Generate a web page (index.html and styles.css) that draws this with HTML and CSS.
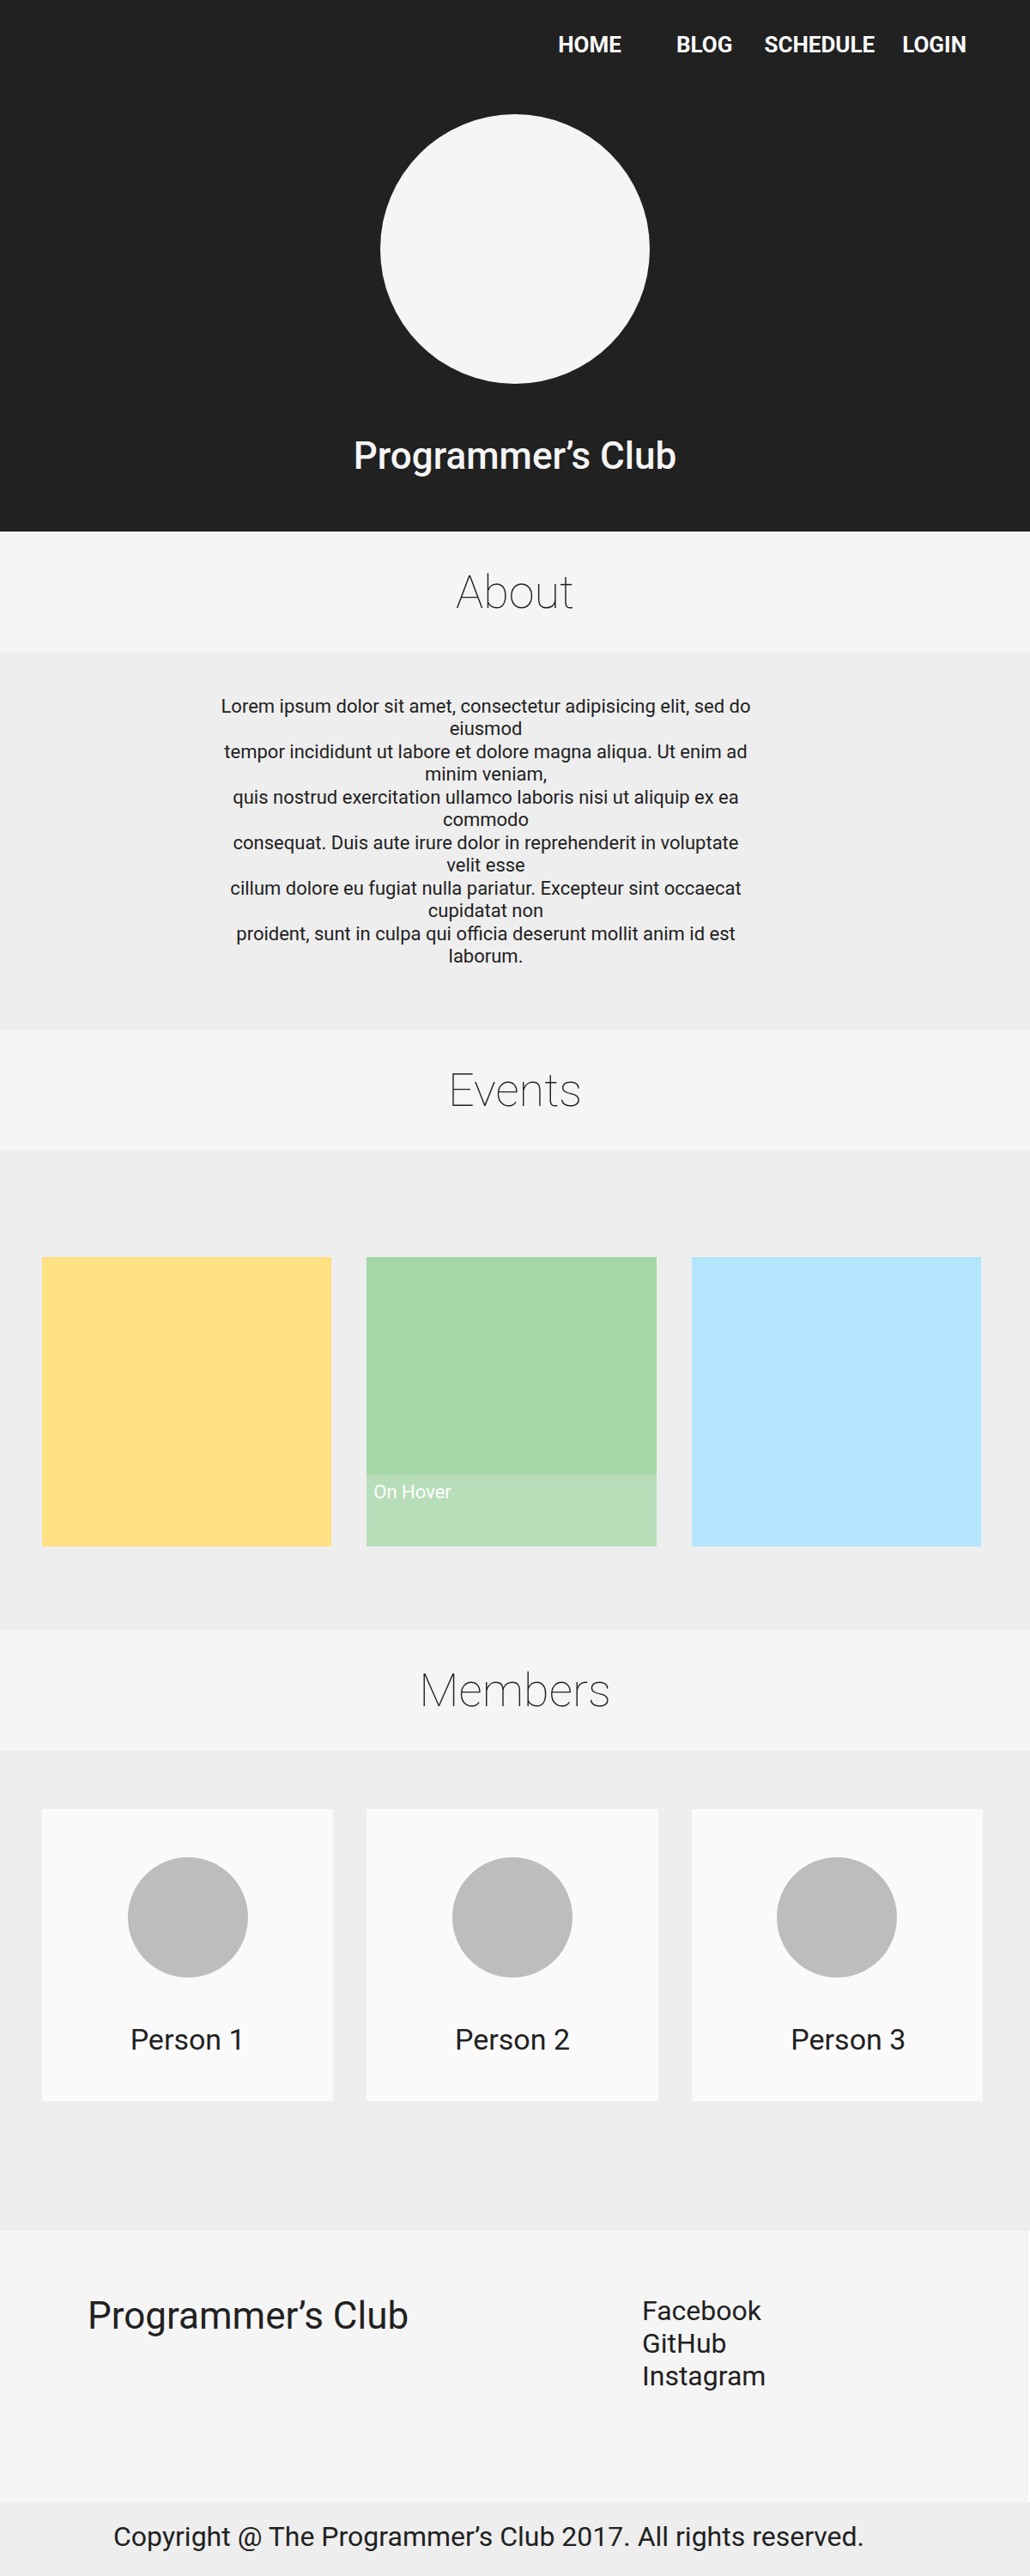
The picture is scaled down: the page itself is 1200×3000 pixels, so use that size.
FILE: index.html
```html
<!DOCTYPE html>
<html lang="en">
<head>
<meta charset="utf-8">
<title>Programmer’s Club</title>
<link rel="stylesheet" href="styles.css">
</head>
<body>
<header class="hero">
  <nav class="nav">
    <a class="nav-home" href="#">HOME</a>
    <a class="nav-blog" href="#">BLOG</a>
    <a class="nav-schedule" href="#">SCHEDULE</a>
    <a href="#">LOGIN</a>
  </nav>
  <div class="logo"></div>
  <h1 class="hero-title">Programmer’s Club</h1>
</header>
<main>
  <h2 class="heading">About</h2>
  <section class="about">
    <div class="about-text">
      <p>Lorem ipsum dolor sit amet, consectetur adipisicing elit, sed do eiusmod</p>
      <p>tempor incididunt ut labore et dolore magna aliqua. Ut enim ad minim veniam,</p>
      <p>quis nostrud exercitation ullamco laboris nisi ut aliquip ex ea commodo</p>
      <p>consequat. Duis aute irure dolor in reprehenderit in voluptate velit esse</p>
      <p>cillum dolore eu fugiat nulla pariatur. Excepteur sint occaecat cupidatat non</p>
      <p>proident, sunt in culpa qui officia deserunt mollit anim id est laborum.</p>
    </div>
  </section>
  <h2 class="heading">Events</h2>
  <section class="grid events">
    <article class="event yellow"></article>
    <article class="event green"><p class="caption">On Hover</p></article>
    <article class="event blue"></article>
  </section>
  <h2 class="heading">Members</h2>
  <section class="grid members">
    <article class="member"><div class="avatar"></div><h3 class="name">Person 1</h3></article>
    <article class="member"><div class="avatar"></div><h3 class="name">Person 2</h3></article>
    <article class="member"><div class="avatar"></div><h3 class="name name-shifted">Person 3</h3></article>
  </section>
</main>
<footer>
  <div class="footer-main">
    <p class="footer-title">Programmer’s Club</p>
    <ul class="social">
      <li><a href="#">Facebook</a></li>
      <li><a href="#">GitHub</a></li>
      <li><a href="#">Instagram</a></li>
    </ul>
  </div>
  <p class="copyright">Copyright @ The Programmer’s Club 2017. All rights reserved.</p>
</footer>
</body>
</html>
```
FILE: styles.css
```css
* { box-sizing: border-box; margin: 0; padding: 0; }
body { font-family: Roboto, "Liberation Sans", sans-serif; color: #212121; background: #eee; }
a { color: inherit; text-decoration: none; }
.hero { background: #212121; color: #f5f5f5; padding: 36px 0 60px; }
.nav { display: flex; justify-content: flex-end; padding-right: 74px; color: #fafafa; font-size: 26px; line-height: 32px; font-weight: 700; }
.nav-home { margin-right: 64px; }
.nav-blog { margin-right: 37px; }
.nav-schedule { margin-right: 32px; }
.logo { width: 314px; height: 314px; margin: 65px auto 0; border-radius: 50%; background: #f5f5f5; }
.hero-title { margin-top: 56px; font-size: 44px; line-height: 56px; font-weight: 500; text-align: center; }
.heading { background: #f5f5f5; font-size: 54px; line-height: 141px; font-weight: 100; text-align: center; }
.about { padding: 50px 0 72px; }
.about-text { display: grid; gap: 1px; max-width: 624px; margin-left: 254px; font-size: 22px; line-height: 26px; text-align: center; }
.grid { display: grid; grid-template-columns: repeat(3, 1fr); }
.events { gap: 41px; padding: 124px 57px 97px 49px; }
.event { aspect-ratio: 1; display: flex; flex-direction: column; justify-content: flex-end; }
.yellow { background: #ffe082; }
.green { background: #a5d6a7; }
.blue { background: #b3e5fc; }
.caption { height: 25%; padding: 8px; background: #b7deb8; color: #fff; font-size: 22px; line-height: 26px; }
.members { gap: 39px; padding: 68px 55px 151px 49px; }
.member { aspect-ratio: 1; background: #fafafa; padding-top: 56px; }
.avatar { width: 140px; height: 140px; margin: 0 auto; border-radius: 50%; background: #bdbdbd; }
.name { margin-top: 52px; font-size: 34px; line-height: 40px; font-weight: 400; text-align: center; }
.name-shifted { padding-left: 26px; }
.footer-main { display: flex; min-height: 316px; padding: 74px 100px 74px 102px; border-right: 2px solid #fff; background: #f5f5f5; }
.footer-title { width: 646px; font-size: 44px; line-height: 50px; }
.social { list-style: none; font-size: 32px; line-height: 38px; }
.copyright { padding: 21px 60px 28px 132px; font-size: 32px; line-height: 38px; }
```
